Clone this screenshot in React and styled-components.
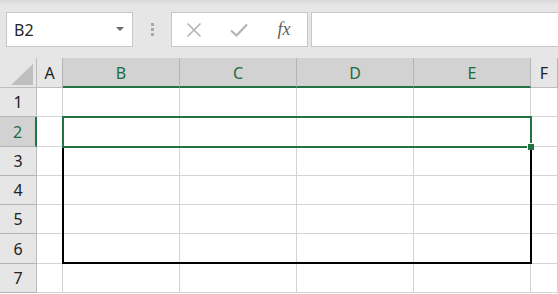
import React from "react";
import styled, { createGlobalStyle } from "styled-components";

const GlobalStyle = createGlobalStyle`
  html, body {
    margin: 0;
    padding: 0;
    background: #ffffff;
    font-family: "Noto Sans", "Open Sans", sans-serif;
    overflow: hidden;
  }
`;

const columns = [
  { name: "A", width: 26 },
  { name: "B", width: 117, active: true },
  { name: "C", width: 117, active: true },
  { name: "D", width: 117, active: true },
  { name: "E", width: 117, active: true },
  { name: "F", width: 27 },
];

const rows = [
  { n: 1, h: 29 },
  { n: 2, h: 30, active: true },
  { n: 3, h: 29 },
  { n: 4, h: 29 },
  { n: 5, h: 29 },
  { n: 6, h: 30 },
  { n: 7, h: 29 },
];

const App = () => {
  return (
    <Page>
      <GlobalStyle />
      <Toolbar>
        <NameBox>
          <span>B2</span>
          <Caret />
        </NameBox>
        <Grip>
          <i />
          <i />
          <i />
        </Grip>
        <FormulaButtons>
          <IconButton $w={44}>
            <svg width="16" height="16" viewBox="0 0 16 16">
              <path d="M1.5 1.5 L14.5 14.5 M14.5 1.5 L1.5 14.5" stroke="#b4b4b4" strokeWidth="1.6" fill="none" />
            </svg>
          </IconButton>
          <IconButton $w={46}>
            <svg width="18" height="14" viewBox="0 0 18 14">
              <path d="M1 7.5 L6.5 12.5 L17 1.5" stroke="#b4b4b4" strokeWidth="2.2" fill="none" />
            </svg>
          </IconButton>
          <Fx>fx</Fx>
        </FormulaButtons>
        <FormulaInput />
      </Toolbar>
      <Sheet>
        <Corner>
          <svg width="22" height="21" viewBox="0 0 22 21">
            <path d="M22 0 L22 21 L0 21 Z" fill="#bfbfbf" />
          </svg>
        </Corner>
        {columns.map((c) => (
          <ColHeader key={c.name} $active={c.active}>
            {c.name}
          </ColHeader>
        ))}
        {rows.map((r) => (
          <React.Fragment key={r.n}>
            <RowHeader $active={r.active} $h={r.h}>
              {r.n}
            </RowHeader>
            {columns.map((c) => (
              <Cell key={c.name} $h={r.h} />
            ))}
          </React.Fragment>
        ))}
        <RangeBorder />
        <Selection>
          <FillHandle />
        </Selection>
      </Sheet>
    </Page>
  );
};

const Page = styled.div`
  width: 558px;
  height: 294px;
  overflow: hidden;
  background: #ffffff;
`;

const Toolbar = styled.div`
  height: 58px;
  box-sizing: border-box;
  padding: 12px 0 0 6px;
  display: flex;
  align-items: flex-start;
  background: linear-gradient(#d9d9d9 0px, #e6e6e6 5px, #e6e6e6 100%);
`;

const NameBox = styled.div`
  width: 127px;
  height: 35px;
  box-sizing: border-box;
  border: 1px solid #c6c6c6;
  background: #ffffff;
  display: flex;
  align-items: center;
  justify-content: space-between;
  padding: 0 8px 0 7px;
  font-size: 16px;
  color: #262626;
`;

const Caret = styled.span`
  width: 0;
  height: 0;
  border-left: 4px solid transparent;
  border-right: 4px solid transparent;
  border-top: 4px solid #6b6b6b;
  margin-top: -2px;
`;

const Grip = styled.div`
  width: 38px;
  height: 35px;
  display: flex;
  flex-direction: column;
  align-items: center;
  justify-content: center;
  gap: 2px;

  i {
    display: block;
    width: 3px;
    height: 3px;
    background: #a8a8a8;
  }
`;

const FormulaButtons = styled.div`
  width: 137px;
  height: 35px;
  box-sizing: border-box;
  border: 1px solid #c6c6c6;
  background: #ffffff;
  display: flex;
  align-items: center;
`;

const IconButton = styled.div`
  width: ${(p) => p.$w}px;
  height: 33px;
  display: flex;
  align-items: center;
  justify-content: center;
`;

const Fx = styled.div`
  width: 44px;
  text-align: center;
  font-family: "Liberation Serif", "DejaVu Serif", serif;
  font-style: italic;
  font-size: 18px;
  color: #606060;
`;

const FormulaInput = styled.div`
  flex: 1;
  height: 35px;
  margin-left: 3px;
  box-sizing: border-box;
  border: 1px solid #c6c6c6;
  border-right: none;
  background: #ffffff;
`;

const Sheet = styled.div`
  position: relative;
  display: grid;
  grid-template-columns: 37px ${columns.map((c) => c.width + "px").join(" ")};
  grid-auto-rows: auto;
  font-family: "Noto Sans", "Open Sans", sans-serif;
`;

const Corner = styled.div`
  height: 30px;
  box-sizing: border-box;
  background: #e6e6e6;
  border-right: 1px solid #bdbdbd;
  border-bottom: 1px solid #bdbdbd;
  display: flex;
  align-items: flex-end;
  justify-content: flex-end;
  padding: 0 3px 2px 0;
`;

const ColHeader = styled.div`
  height: 30px;
  box-sizing: border-box;
  background: ${(p) => (p.$active ? "#d2d2d2" : "#e6e6e6")};
  color: ${(p) => (p.$active ? "#1e6b41" : "#222222")};
  border-right: 1px solid #b4b4b4;
  border-bottom: ${(p) => (p.$active ? "2px solid #217346" : "1px solid #bdbdbd")};
  display: flex;
  align-items: center;
  justify-content: center;
  font-size: 16px;
  padding-top: ${(p) => (p.$active ? "1px" : "0")};
`;

const RowHeader = styled.div`
  height: ${(p) => p.$h}px;
  box-sizing: border-box;
  background: ${(p) => (p.$active ? "#d2d2d2" : "#e6e6e6")};
  color: ${(p) => (p.$active ? "#1e6b41" : "#222222")};
  border-bottom: 1px solid #b4b4b4;
  border-right: ${(p) => (p.$active ? "2px solid #217346" : "1px solid #bdbdbd")};
  display: flex;
  align-items: center;
  justify-content: center;
  font-size: 16px;
`;

const Cell = styled.div`
  height: ${(p) => p.$h}px;
  box-sizing: border-box;
  border-right: 1px solid #d4d4d4;
  border-bottom: 1px solid #d4d4d4;
`;

const Selection = styled.div`
  position: absolute;
  left: 62px;
  top: 58px;
  width: 470px;
  height: 32px;
  box-sizing: border-box;
  border: 2px solid #217346;
`;

const FillHandle = styled.div`
  position: absolute;
  right: -4px;
  bottom: -4px;
  width: 6px;
  height: 6px;
  background: #217346;
  border: 1px solid #ffffff;
  border-right: none;
  border-bottom: none;
`;

const RangeBorder = styled.div`
  position: absolute;
  left: 62px;
  top: 88px;
  width: 470px;
  height: 118px;
  box-sizing: border-box;
  border: 2px solid #000000;
`;

export default App;
